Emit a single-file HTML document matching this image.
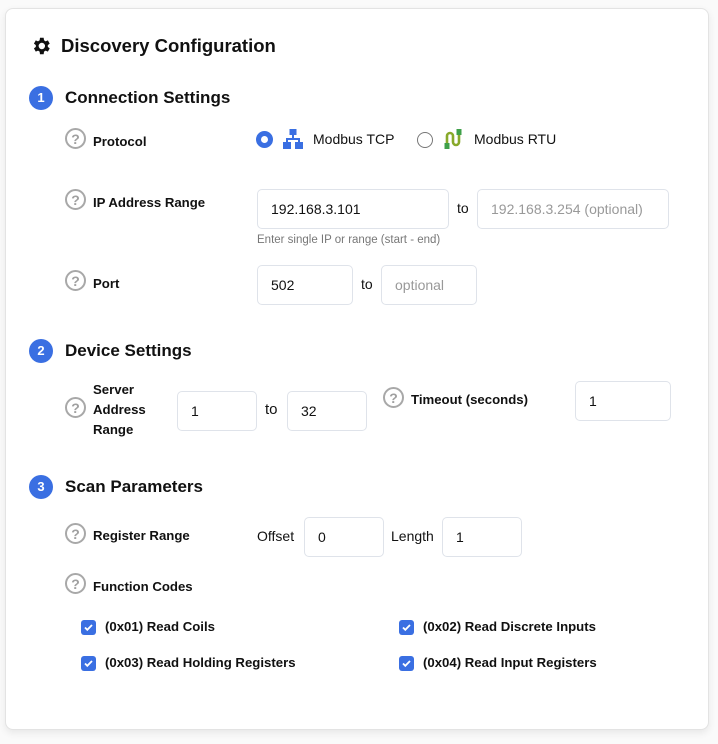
<!DOCTYPE html>
<html><head><meta charset="utf-8"><style>
*{box-sizing:border-box;margin:0;padding:0}
body{width:718px;height:744px;background:#fafafa;font-family:"Liberation Sans",Roboto,sans-serif;color:#111;position:relative;overflow:hidden}
.card{position:absolute;left:5px;top:8px;width:704px;height:722px;background:#fff;border:1px solid #e3e3e3;border-radius:8px;box-shadow:0 3px 8px rgba(0,0,0,.08)}
.a{position:absolute;white-space:nowrap}
.h1{font-size:18.5px;font-weight:bold}
.h2{font-size:17px;font-weight:bold}
.num{width:24px;height:24px;border-radius:50%;background:#3a6fe2;color:#fff;font-size:13px;font-weight:bold;text-align:center;line-height:24px}
.q{width:21px;height:21px;border:2px solid #a8a8a8;border-radius:50%;color:#a0a0a0;font-size:14px;font-weight:bold;text-align:center;line-height:18px}
.lbl{font-size:13.2px;font-weight:bold}
.in{position:absolute;border:1px solid #dfe3ea;border-radius:5px;height:40px;font-size:14px;padding-left:13px;line-height:38px;color:#111}
.ph{color:#999}
.t{font-size:14px}
.cb{position:absolute;width:15px;height:15px;background:#3a6fe2;border-radius:3px}
.cb svg{position:absolute;left:2px;top:2px}
</style></head><body>
<div class="card"></div>
<svg class="a" style="left:30px;top:35px" width="22" height="22" viewBox="0 0 24 24"><path fill="#111" d="M19.4 13a7.5 7.5 0 0 0 0-2l2.1-1.6-2-3.5-2.5 1a7.6 7.6 0 0 0-1.7-1L14.9 3h-4l-.4 2.9a7.6 7.6 0 0 0-1.7 1l-2.5-1-2 3.5L6.4 11a7.5 7.5 0 0 0 0 2l-2.1 1.6 2 3.5 2.5-1a7.6 7.6 0 0 0 1.7 1l.4 2.9h4l.4-2.9a7.6 7.6 0 0 0 1.7-1l2.5 1 2-3.5zM12.9 15.5a3.5 3.5 0 1 1 0-7 3.5 3.5 0 0 1 0 7z"/></svg>
<div class="a h1" style="left:61px;top:35px">Discovery Configuration</div>

<div class="a num" style="left:29px;top:86px">1</div>
<div class="a h2" style="left:65px;top:88px">Connection Settings</div>

<div class="a q" style="left:65px;top:128px">?</div>
<div class="a lbl" style="left:93px;top:134px">Protocol</div>
<div class="a" style="left:256px;top:131px;width:17px;height:17px;border-radius:50%;border:5px solid #3a6fe2"></div>
<svg class="a" style="left:283px;top:129px" width="20" height="20" viewBox="0 0 20 20"><g fill="#3a6fe2"><rect x="6.5" y="0" width="7" height="6"/><rect x="9" y="6" width="2" height="4"/><rect x="3" y="9" width="14" height="2"/><rect x="3" y="9" width="2" height="5"/><rect x="15" y="9" width="2" height="5"/><rect x="0" y="13" width="8" height="7"/><rect x="12" y="13" width="8" height="7"/></g></svg>
<div class="a t" style="left:313px;top:131px">Modbus TCP</div>
<div class="a" style="left:417px;top:132px;width:16px;height:16px;border-radius:50%;border:1.5px solid #777"></div>
<svg class="a" style="left:443px;top:128px" width="20" height="22" viewBox="0 0 20 22"><path d="M4 18V8a3 3 0 0 1 6 0v6a3 3 0 0 0 6 0V4" stroke="#88a92a" stroke-width="2.6" fill="none"/><rect x="1.5" y="15" width="5" height="6" fill="#3fa04a"/><rect x="13.5" y="1" width="5" height="6" fill="#3fa04a"/></svg>
<div class="a t" style="left:474px;top:131px">Modbus RTU</div>

<div class="a q" style="left:65px;top:189px">?</div>
<div class="a lbl" style="left:93px;top:195px">IP Address Range</div>
<div class="in" style="left:257px;top:189px;width:192px">192.168.3.101</div>
<div class="a t" style="left:457px;top:200px">to</div>
<div class="in ph" style="left:477px;top:189px;width:192px">192.168.3.254 (optional)</div>
<div class="a" style="left:257px;top:234px;font-size:11.5px;color:#777">Enter single IP or range (start - end)</div>

<div class="a q" style="left:65px;top:270px">?</div>
<div class="a lbl" style="left:93px;top:276px">Port</div>
<div class="in" style="left:257px;top:265px;width:96px">502</div>
<div class="a t" style="left:361px;top:276px">to</div>
<div class="in ph" style="left:381px;top:265px;width:96px">optional</div>

<div class="a num" style="left:29px;top:339px">2</div>
<div class="a h2" style="left:65px;top:341px">Device Settings</div>
<div class="a q" style="left:65px;top:397px">?</div>
<div class="a lbl" style="left:93px;top:380px;white-space:normal;width:70px;line-height:20px">Server Address Range</div>
<div class="in" style="left:177px;top:391px;width:80px">1</div>
<div class="a t" style="left:265px;top:401px;font-size:15px">to</div>
<div class="in" style="left:287px;top:391px;width:80px">32</div>
<div class="a q" style="left:383px;top:387px">?</div>
<div class="a lbl" style="left:411px;top:392px">Timeout (seconds)</div>
<div class="in" style="left:575px;top:381px;width:96px">1</div>

<div class="a num" style="left:29px;top:475px">3</div>
<div class="a h2" style="left:65px;top:477px">Scan Parameters</div>
<div class="a q" style="left:65px;top:523px">?</div>
<div class="a lbl" style="left:93px;top:528px">Register Range</div>
<div class="a t" style="left:257px;top:528px">Offset</div>
<div class="in" style="left:304px;top:517px;width:80px">0</div>
<div class="a t" style="left:391px;top:528px">Length</div>
<div class="in" style="left:442px;top:517px;width:80px">1</div>
<div class="a q" style="left:65px;top:573px">?</div>
<div class="a lbl" style="left:93px;top:579px">Function Codes</div>

<div class="cb" style="left:81px;top:620px"><svg width="11" height="11" viewBox="0 0 11 11"><path d="M2 5.5l2.3 2.3L9 3" stroke="#fff" stroke-width="1.8" fill="none"/></svg></div>
<div class="a lbl" style="left:105px;top:619px">(0x01) Read Coils</div>
<div class="cb" style="left:399px;top:620px"><svg width="11" height="11" viewBox="0 0 11 11"><path d="M2 5.5l2.3 2.3L9 3" stroke="#fff" stroke-width="1.8" fill="none"/></svg></div>
<div class="a lbl" style="left:423px;top:619px">(0x02) Read Discrete Inputs</div>
<div class="cb" style="left:81px;top:656px"><svg width="11" height="11" viewBox="0 0 11 11"><path d="M2 5.5l2.3 2.3L9 3" stroke="#fff" stroke-width="1.8" fill="none"/></svg></div>
<div class="a lbl" style="left:105px;top:655px">(0x03) Read Holding Registers</div>
<div class="cb" style="left:399px;top:656px"><svg width="11" height="11" viewBox="0 0 11 11"><path d="M2 5.5l2.3 2.3L9 3" stroke="#fff" stroke-width="1.8" fill="none"/></svg></div>
<div class="a lbl" style="left:423px;top:655px">(0x04) Read Input Registers</div>
</body></html>
